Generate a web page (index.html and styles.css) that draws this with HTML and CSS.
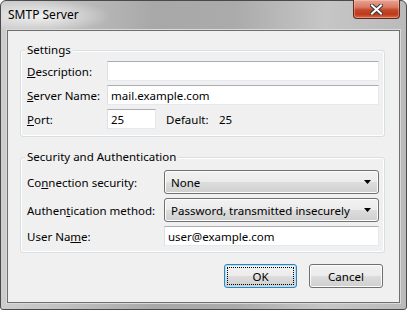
FILE: index.html
```html
<!DOCTYPE html>
<html lang="en">

<head>
    <meta charset="UTF-8">
    <title>SMTP Server</title>
    <link rel="stylesheet" href="styles.css">
</head>

<body>
    <div class="window">
        <div class="titlebar">
            <span class="title">SMTP Server</span>
            <div class="close">
                <svg width="13" height="11" viewBox="0 0 13 11">
                    <path d="M2 1.5 L11 9.5 M11 1.5 L2 9.5" stroke="#3a3a3a" stroke-width="4" stroke-linecap="square" />
                    <path d="M2 1.5 L11 9.5 M11 1.5 L2 9.5" stroke="#ffffff" stroke-width="2" stroke-linecap="square" />
                </svg>
            </div>
        </div>

        <div class="client">
            <fieldset class="group settings">
                <legend>Settings</legend>
                <div class="rows">
                    <div class="row">
                        <label class="lbl"><u>D</u>escription:</label>
                        <input class="field wide" type="text" value="">
                    </div>
                    <div class="row">
                        <label class="lbl"><u>S</u>erver Name:</label>
                        <input class="field wide" type="text" value="mail.example.com">
                    </div>
                    <div class="row">
                        <label class="lbl"><u>P</u>ort:</label>
                        <input class="field port" type="text" value="25">
                        <span class="default-lbl">Default:</span>
                        <span>25</span>
                    </div>
                </div>
            </fieldset>

            <fieldset class="group security">
                <legend>Security and Authentication</legend>
                <div class="row combo-row">
                    <label class="lbl lbl-long">Co<u>n</u>nection security:</label>
                    <div class="combo">
                        <span>None</span>
                        <svg width="7" height="4" viewBox="0 0 7 4"><path d="M0 0 H7 L3.5 4 Z" fill="#000" /></svg>
                    </div>
                </div>
                <div class="row combo-row">
                    <label class="lbl lbl-long">Authen<u>t</u>ication method:</label>
                    <div class="combo">
                        <span>Password, transmitted insecurely</span>
                        <svg width="7" height="4" viewBox="0 0 7 4"><path d="M0 0 H7 L3.5 4 Z" fill="#000" /></svg>
                    </div>
                </div>
                <div class="row user-row">
                    <label class="lbl lbl-long">User Na<u>m</u>e:</label>
                    <input class="field user" type="text" value="user@example.com">
                </div>
            </fieldset>

            <div class="buttons">
                <button class="btn btn-default" type="button">OK</button>
                <button class="btn btn-cancel" type="button">Cancel</button>
            </div>
        </div>
    </div>
</body>

</html>
```

FILE: styles.css
```css
body {
    margin: 0;
    background-color: #ffffff;
    font-family: 'Noto Sans', 'Liberation Sans', sans-serif;
    font-size: 11.5px;
    color: #000;
}

.window {
    width: 407px;
    height: 310px;
    box-sizing: border-box;
    border: 1px solid #4a4a4a;
    border-radius: 6px 6px 3px 3px;
    background: linear-gradient(to right, #cdcdcd 0%, #c4c4c4 12%, #a8a8a8 38%, #ababab 58%, #c6c6c6 80%, #bababa 100%);
    display: flex;
    flex-direction: column;
}

.titlebar {
    height: 29px;
    display: flex;
    justify-content: space-between;
    align-items: flex-start;
    background: radial-gradient(ellipse 70px 16px at 40px 15px, rgba(255, 255, 255, 0.75), rgba(255, 255, 255, 0));
}

.title {
    margin: 6px 0 0 7px;
    font-size: 12px;
    line-height: 16px;
    color: #000;
}

.close {
    width: 47px;
    height: 19px;
    margin: -1px 6px 0 0;
    box-sizing: border-box;
    border: 1px solid #5e2a1e;
    border-top: none;
    border-radius: 0 0 4px 4px;
    background: linear-gradient(#e9a494 0%, #d97a64 40%, #c4482b 55%, #c0391b 80%, #d8704f 100%);
    box-shadow: inset 0 0 0 1px rgba(255, 220, 210, 0.35);
    display: flex;
    align-items: center;
    justify-content: center;
}

.client {
    height: 273px;
    margin: 0 6px;
    box-sizing: border-box;
    border: 1px solid #6e6e6e;
    box-shadow: 0 0 0 1px #dadada;
    background-color: #f0f0f0;
}

.group {
    margin: 11px 14px 0 12px;
    border: 1px solid #d5dfe5;
    border-radius: 3px;
    box-shadow: inset 0 0 0 1px #ffffff;
    min-inline-size: 0;
}

.group legend {
    margin-left: -2px;
    padding: 0 2px;
    line-height: 16px;
    background-color: #f0f0f0;
}

.settings {
    padding: 3px 5px 7px 6px;
}

.security {
    margin-top: 12px;
    padding: 5px 5px 6px 6px;
}

.rows {
    display: flex;
    flex-direction: column;
    gap: 4px;
}

.row {
    display: flex;
    align-items: center;
    height: 20px;
}

.combo-row {
    height: 24px;
    margin-bottom: 4px;
}

.user-row {
    margin-top: 1px;
}

.lbl {
    width: 80px;
    flex-shrink: 0;
}

.lbl-long {
    width: 137px;
}

.field {
    height: 20px;
    box-sizing: border-box;
    margin: 0;
    padding: 0 3px;
    border: 1px solid #e3e9ef;
    border-top-color: #abadb3;
    border-left-color: #dbdfe6;
    background-color: #fff;
    font-family: inherit;
    font-size: inherit;
    color: #000;
}

.wide {
    width: 272px;
}

.port {
    width: 49px;
}

.user {
    width: 215px;
}

.default-lbl {
    width: 53px;
    margin-left: 10px;
}

.combo,
.btn {
    box-sizing: border-box;
    border: 1px solid #707070;
    border-radius: 3px;
    background: linear-gradient(#f2f2f2 0%, #ebebeb 50%, #dddddd 50%, #cfcfcf 100%);
    box-shadow: inset 0 0 0 1px #fcfcfc;
    font-family: inherit;
    font-size: inherit;
    color: #000;
}

.combo {
    width: 215px;
    height: 24px;
    display: flex;
    align-items: center;
    justify-content: space-between;
    padding: 0 7px 0 6px;
}

.buttons {
    display: flex;
    justify-content: flex-end;
    gap: 12px;
    margin: 11px 16px 0 0;
}

.btn {
    height: 24px;
    padding: 0;
}

.btn-default {
    width: 73px;
    border-color: #3c7fb1;
    box-shadow: inset 0 0 0 1px #a8e4fb;
    outline: 1px dotted #000;
    outline-offset: -4px;
}

.btn-cancel {
    width: 74px;
}
```
